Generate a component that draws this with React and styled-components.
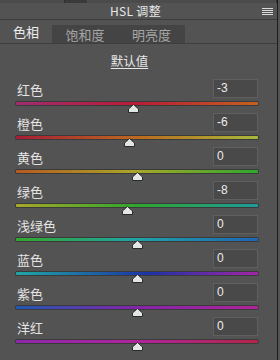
import React from "react"
import styled, { createGlobalStyle } from "styled-components"

const GlobalStyle = createGlobalStyle`
  html, body {
    margin: 0;
    padding: 0;
    background: #535353;
  }
  body {
    font-family: "Noto Sans CJK SC", "DejaVu Sans", sans-serif;
  }
`

const Panel = styled.div`
  width: 278px;
  height: 360px;
  background: #535353;
  color: #e4e4e4;
  overflow: hidden;
  display: flex;
  flex-direction: column;
  border-right: 1px solid #1e1e1e;
  box-sizing: border-box;
`

const TopStrip = styled.div`
  height: 3px;
  display: flex;
  background: #3a3a3a;

  .seg {
    background: #4b4b4b;
    border-right: 1px solid #2e2e2e;
  }
  .seg--a {
    width: 64px;
  }
  .seg--b {
    margin-left: 22px;
    flex: 1;
  }
`

const Header = styled.div`
  height: 16px;
  display: grid;
  grid-template-columns: 1fr auto 1fr;
  align-items: center;
  border-bottom: 1px solid #3c3c3c;
  padding-right: 6px;

  .title {
    grid-column: 2;
    font-size: 12px;
    line-height: 16px;
    color: #e8e8e8;
    letter-spacing: 0.3px;
  }
  .menu {
    grid-column: 3;
    justify-self: end;
    display: flex;
    flex-direction: column;
    gap: 1px;
    margin-right: -2px;
  }
  .menu span {
    width: 11px;
    height: 1px;
    background: #d8d8d8;
  }
`

const Tabs = styled.div`
  height: 23px;
  display: flex;
  align-items: flex-end;
  border-bottom: 1px solid #3e3e3e;
`

const Tab = styled.div`
  height: ${props => (props.active ? "23px" : "18px")};
  display: flex;
  align-items: center;
  justify-content: center;
  font-size: 13px;
  color: ${props => (props.active ? "#ececec" : "#a6a6a6")};
  background: ${props => (props.active ? "#535353" : "#444444")};
  width: ${props => props.w}px;
`

const DefaultLink = styled.div`
  align-self: center;
  margin: 9px 0 0 -18px;
  height: 26px;
  font-size: 12.5px;
  line-height: 16px;
  color: #e6e6e6;
  text-decoration: underline;
  text-underline-offset: 2px;
`

const Rows = styled.div`
  display: flex;
  flex-direction: column;
  padding: 0 19px 0 16px;
`

const Row = styled.div`
  height: 34px;
  display: flex;
  flex-direction: column;
`

const RowHead = styled.div`
  height: 19px;
  display: flex;
  align-items: center;
  justify-content: space-between;

  .label {
    padding-left: 1px;
    font-size: 13px;
    line-height: 16px;
    color: #e4e4e4;
    margin-top: 2px;
  }
`

const ValueBox = styled.div`
  width: 40px;
  height: 17px;
  background: #494949;
  border: 1px solid #5f5f5f;
  font-family: "Liberation Sans", sans-serif;
  font-size: 12px;
  line-height: 17px;
  padding-left: 3px;
  color: #ececec;
`

const TrackWrap = styled.div`
  position: relative;
  margin-top: 4px;
  height: 11px;
`

const Track = styled.div`
  height: 3px;
  border-radius: 1px;
  background: linear-gradient(to right, ${props => props.stops});
  box-shadow: 0 0 0 1px #3a3a3a;
`

const Thumb = styled.svg`
  position: absolute;
  top: 2px;
  width: 11px;
  height: 9px;
  margin-left: -5.5px;
`

const colours = [
  { label: "红色", value: -3, stops: "#a02c70, #b81c36 50%, #c4601e" },
  { label: "橙色", value: -6, stops: "#a81c34, #bc6a1e 50%, #a8b83a" },
  { label: "黄色", value: 0, stops: "#b85a20, #a8a828 50%, #2ca82e" },
  { label: "绿色", value: -8, stops: "#a8a828, #2ea62e 50%, #1e9c9a" },
  { label: "浅绿色", value: 0, stops: "#34a82c, #1ea4a6 50%, #2064b4" },
  { label: "蓝色", value: 0, stops: "#1ea8a4, #1c32a8 55%, #a424a8" },
  { label: "紫色", value: 0, stops: "#2058b4, #8424aa 50%, #b0249a" },
  { label: "洋红", value: 0, stops: "#8c28aa, #b0249c 50%, #b42448" },
]

const SliderRow = ({ label, value, stops }) => {
  const pos = 50 + value / 2
  return (
    <Row>
      <RowHead>
        <span className="label">{label}</span>
        <ValueBox>{value}</ValueBox>
      </RowHead>
      <TrackWrap>
        <Track stops={stops} />
        <Thumb viewBox="0 0 11 9" style={{ left: `${pos}%` }}>
          <path d="M5.5 0.5 L10.5 5 L10.5 8.5 L0.5 8.5 L0.5 5 Z" fill="#e2e6e4" stroke="#2a2a2a" strokeWidth="1" />
        </Thumb>
      </TrackWrap>
    </Row>
  )
}

const App = () => (
  <>
    <GlobalStyle />
    <Panel>
      <TopStrip>
        <div className="seg seg--a" />
        <div className="seg seg--b" />
      </TopStrip>
      <Header>
        <span className="title">HSL 调整</span>
        <div className="menu">
          <span />
          <span />
          <span />
          <span />
        </div>
      </Header>
      <Tabs>
        <Tab active w={52}>色相</Tab>
        <Tab w={66}>饱和度</Tab>
        <Tab w={67}>明亮度</Tab>
      </Tabs>
      <DefaultLink>默认值</DefaultLink>
      <Rows>
        {colours.map(c => (
          <SliderRow key={c.label} {...c} />
        ))}
      </Rows>
    </Panel>
  </>
)

export default App
